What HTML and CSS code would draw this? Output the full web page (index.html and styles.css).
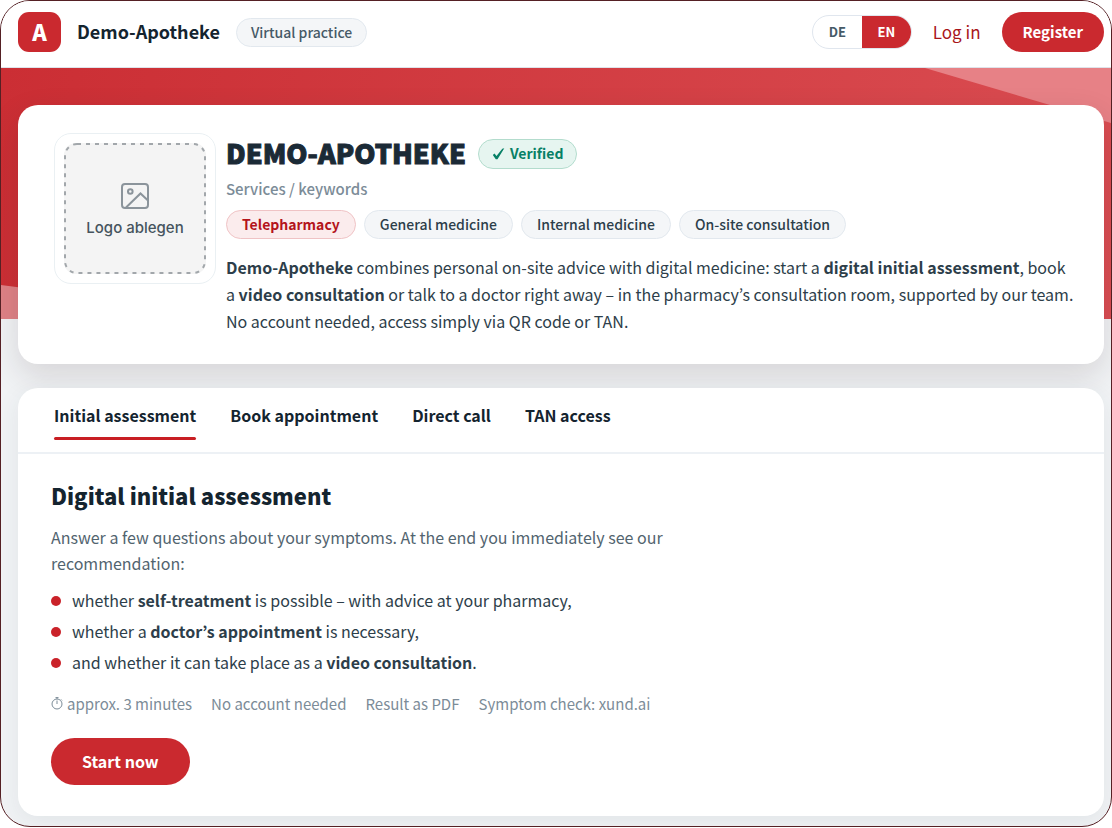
FILE: index.html
```html
<!DOCTYPE html>
<html lang="en">
<head>
<meta charset="utf-8">
<meta name="viewport" content="width=device-width, initial-scale=1">
<title>Demo-Apotheke – Virtual practice</title>
<link rel="stylesheet" href="styles.css">
</head>
<body>
<div class="frame">
  <header class="topbar">
    <span class="brand-mark" aria-hidden="true">A</span>
    <span class="brand-name">Demo-Apotheke</span>
    <span class="brand-tag">Virtual practice</span>
    <div class="lang" role="group" aria-label="Language">
      <button class="lang-item" type="button">DE</button>
      <button class="lang-item lang-active" type="button" aria-pressed="true">EN</button>
    </div>
    <a class="login" href="#login">Log in</a>
    <button class="button register" type="button">Register</button>
  </header>

  <main class="page">
    <div class="hero-bg" aria-hidden="true"></div>
    <section class="card profile">
      <div class="logo-box">
        <button class="logo-drop" type="button">
          <svg class="logo-outline" aria-hidden="true"><rect x="1" y="1" rx="12"/></svg>
          <svg class="logo-icon" viewBox="0 0 28 26" aria-hidden="true">
            <rect x="1" y="1" width="26" height="24" rx="3"/>
            <circle cx="9.300" cy="8.500" r="2.300"/>
            <path d="M5 24.500 19.500 10.500 27 17.500"/>
          </svg>
          <span>Logo ablegen</span>
        </button>
      </div>
      <div class="profile-info">
        <div class="title-row">
          <h1 class="title">DEMO-APOTHEKE</h1>
          <span class="verified">
            <svg class="check" viewBox="0 0 12 12" aria-hidden="true"><path d="M.3 7 2 5.600 4 8 9.800.8 11.800.3 5 11.200 3.300 11.200Z"/></svg>
            Verified
          </span>
        </div>
        <p class="keywords">Services / keywords</p>
        <ul class="chips">
          <li class="chip chip-main">Telepharmacy</li>
          <li class="chip">General medicine</li>
          <li class="chip">Internal medicine</li>
          <li class="chip">On-site consultation</li>
        </ul>
        <p class="about"><strong>Demo-Apotheke</strong> combines personal on-site advice with digital medicine: start a <strong>digital initial assessment</strong>, book a <strong>video consultation</strong> or talk to a doctor right away – in the pharmacy’s consultation room, supported by our team. No account needed, access simply via QR code or TAN.</p>
      </div>
    </section>

    <section class="card services">
      <div class="tabs" role="tablist">
        <button class="tab tab-active" type="button" role="tab" aria-selected="true">Initial assessment</button>
        <button class="tab" type="button" role="tab">Book appointment</button>
        <button class="tab" type="button" role="tab">Direct call</button>
        <button class="tab" type="button" role="tab">TAN access</button>
      </div>
      <div class="panel" role="tabpanel">
        <h2 class="panel-title">Digital initial assessment</h2>
        <p class="lead">Answer a few questions about your symptoms. At the end you immediately see our recommendation:</p>
        <ul class="points">
          <li>whether <strong>self-treatment</strong> is possible – with advice at your pharmacy,</li>
          <li>whether a <strong>doctor’s appointment</strong> is necessary,</li>
          <li>and whether it can take place as a <strong>video consultation</strong>.</li>
        </ul>
        <ul class="facts">
          <li class="fact">
            <svg class="clock" viewBox="0 0 12 13" aria-hidden="true"><circle cx="6" cy="7" r="5"/><path d="M6 7V3.500M4.500.6h3M6 .6V2M10 2.400l1 1"/></svg>
            approx. 3 minutes
          </li>
          <li>No account needed</li>
          <li>Result as PDF</li>
          <li>Symptom check: xund.ai</li>
        </ul>
        <button class="button start" type="button">Start now</button>
      </div>
    </section>
  </main>
</div>
</body>
</html>
```

FILE: styles.css
```css
*, *::before, *::after { box-sizing: border-box; }

body {
  margin: 0;
  background: #fff;
  color: #2d3e4a;
  font: 400 16px/27px "Noto Sans CJK KR", "Noto Sans", sans-serif;
}

h1, h2, p, ul { margin: 0; padding: 0; }
ul { list-style: none; }
button { font: inherit; color: inherit; border: 0; background: none; padding: 0; cursor: pointer; }
strong { font-weight: 700; }

.frame {
  min-height: calc(100vh - 1px);
  border: 1px solid #552024;
  border-radius: 30px;
  overflow: hidden;
  background: #f1f3f5;
}

.topbar {
  display: flex;
  align-items: center;
  height: 67px;
  padding: 0 7px 4px 17px;
  border-bottom: 1px solid #dfe3ea;
  background: #fff;
}
.brand-mark {
  width: 43px;
  height: 40px;
  border-radius: 11px;
  background: #ca292f;
  color: #fff;
  font-size: 22px;
  font-weight: 900;
  line-height: 38px;
  text-align: center;
}
.brand-name { margin-left: 16px; padding-bottom: 2px; color: #14242f; font-size: 18px; font-weight: 700; }
.brand-tag {
  margin-left: 16px;
  padding: 0 14px;
  border: 1px solid #e2e8ee;
  border-radius: 15px;
  background: #f4f6f8;
  color: #465a67;
  font-size: 14px;
  font-weight: 500;
}

.lang {
  display: flex;
  margin-left: auto;
  border: 1px solid #e0e6ee;
  border-radius: 17px;
  overflow: hidden;
  color: #465a67;
  font-size: 13px;
  font-weight: 700;
  line-height: 32px;
}
.lang-item { width: 49px; }
.lang-active { background: #ca292f; color: #fff; }
.login { margin: 0 21px; padding-bottom: 2px; color: #a9151b; font-size: 17px; text-decoration: none; }

.button { background: #ca292f; color: #fff; font-weight: 700; }
.register { height: 40px; padding: 0 21px 2px; border-radius: 20px; font-size: 15px; }

.page {
  display: grid;
  grid-template-columns: minmax(0, 1fr);
  grid-template-rows: 37px auto auto;
  padding: 0 7px 10px 17px;
  position: relative;
}
.hero-bg {
  position: absolute;
  inset: 0 0 auto;
  height: 251px;
  background: linear-gradient(100deg, #cb2e34, #da4d52);
}
.hero-bg::before, .hero-bg::after { content: ""; position: absolute; inset: 0; }
.hero-bg::before { background: #e78186; clip-path: polygon(924px 0, 100% 0, 100% 55px); }
.hero-bg::after { background: #df8286; clip-path: polygon(0 217px, 260px 100%, 0 100%); }

.card { position: relative; border-radius: 20px; background: #fff; }

.profile {
  grid-row: 2;
  display: flex;
  align-items: flex-start;
  gap: 10px;
  padding: 28px 28px 29px 36px;
  box-shadow: 0 12px 32px rgba(50, 30, 35, .14);
}
.logo-box {
  flex: none;
  width: 162px;
  height: 151px;
  padding: 9px;
  border: 1px solid #eaf0f3;
  border-radius: 17px;
}
.logo-drop {
  position: relative;
  display: flex;
  flex-direction: column;
  align-items: center;
  justify-content: center;
  gap: 6px;
  width: 100%;
  height: 100%;
  padding-top: 7px;
  border-radius: 12px;
  background: #f4f4f4;
  color: #46545e;
  font: 500 15px/26px Inter, sans-serif;
}
.logo-outline { position: absolute; inset: 0; width: 100%; height: 100%; }
.logo-outline rect {
  width: calc(100% - 2px);
  height: calc(100% - 2px);
  fill: none;
  stroke: #a2a7ab;
  stroke-width: 2;
  stroke-dasharray: 4 5;
}
.logo-icon { width: 28px; height: 26px; fill: none; stroke: #8b949b; stroke-width: 2; }

.profile-info { flex: 1; min-width: 0; }
.title-row { display: flex; align-items: center; gap: 12px; height: 42px; }
.title {
  padding-bottom: 3px;
  color: #1b2a36;
  font-size: 27px;
  font-weight: 900;
  line-height: 39px;
  -webkit-text-stroke: 1px #1b2a36;
}
.verified {
  display: flex;
  align-items: center;
  gap: 5px;
  height: 30px;
  padding: 0 13px 1px;
  border: 1px solid #b3dccd;
  border-radius: 15px;
  background: #e6f5f0;
  color: #078066;
  font-size: 14px;
  font-weight: 700;
}
.check { width: 13px; height: 12px; fill: currentColor; }
.keywords { color: #7c8c98; font-size: 15px; font-weight: 500; }
.chips { display: flex; flex-wrap: wrap; gap: 8px; margin-top: 8px; }
.chip {
  padding: 0 15px;
  border: 1px solid #e2e8ee;
  border-radius: 15px;
  background: #f4f6f8;
  color: #2d3e4a;
  font-size: 14px;
  font-weight: 500;
}
.chip-main { border-color: #efc3c5; background: #fbeced; color: #b4141b; font-weight: 700; }
.about { margin-top: 15px; }

.services {
  grid-row: 3;
  margin-top: 24px;
  box-shadow: 0 6px 24px rgba(40, 60, 80, .08);
}
.tabs {
  display: flex;
  flex-wrap: wrap;
  gap: 34px;
  padding: 14px 36px 12px;
  border-bottom: 2px solid #edf1f5;
  color: #14242f;
  font-weight: 700;
}
.tab { line-height: 26px; }
.tab::after { content: ""; display: block; height: 3px; margin-top: 9px; border-radius: 2px; }
.tab-active::after { background: #c81e23; }

.panel { padding: 25px 33px 31px; }
.panel-title {
  color: #14242f;
  font-size: 22px;
  font-weight: 900;
  line-height: 32px;
}
.lead { max-width: 640px; margin-top: 13px; color: #52646f; line-height: 26px; }
.points { margin-top: 9px; }
.points li { display: flex; align-items: center; line-height: 31px; white-space: pre; }
.points li::before {
  content: "";
  width: 10px;
  height: 10px;
  margin-right: 11px;
  border-radius: 50%;
  background: #ca2229;
}
.facts { display: flex; flex-wrap: wrap; gap: 0 19px; margin-top: 12px; color: #7c8c98; font-size: 15px; }
.fact { display: flex; align-items: center; gap: 4px; }
.clock { width: 12px; height: 13px; fill: none; stroke: currentColor; }
.start { height: 47px; margin-top: 21px; padding: 0 31px; border-radius: 24px; }
```
